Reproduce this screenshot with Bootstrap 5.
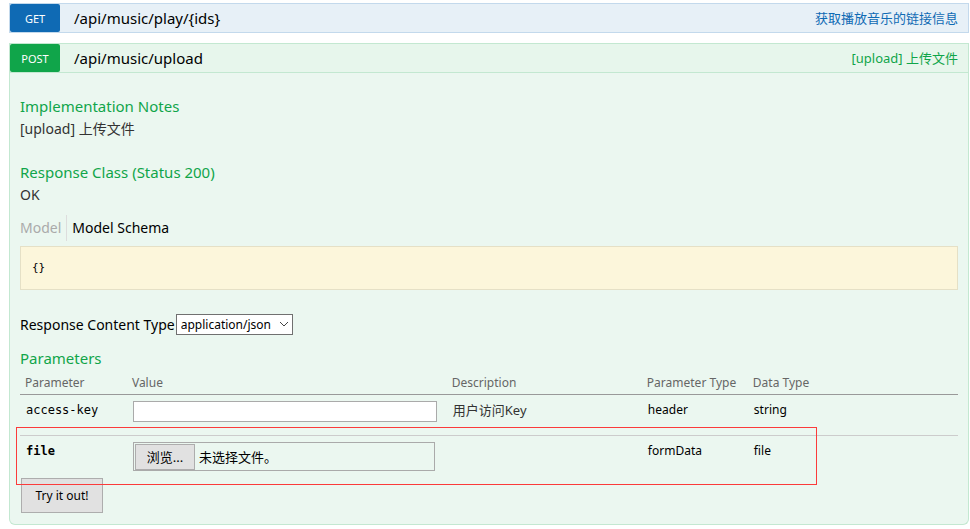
<!DOCTYPE html>
<html lang="zh-CN">
<head>
<meta charset="utf-8">
<meta name="viewport" content="width=device-width, initial-scale=1">
<title>API music</title>
<link rel="stylesheet" href="https://cdn.jsdelivr.net/npm/bootstrap@5.3.0/dist/css/bootstrap.min.css">
<style>
body { font: 14px/20px "Noto Sans", "Noto Sans CJK SC", sans-serif; color: #000; background: #fff; padding: 3px 1px 4px 9px; }
a { text-decoration: none; }
.op-get { background: #e7f0f7; border: 1px solid #c3d9ec; margin-bottom: 10px; }
.op-post { background: #e7f6ec; border: 1px solid #c3e8d1; }
.op-get, .op-post { height: 30px; }
.verb { width: 50px; height: 28px; border-radius: 2px; color: #fff; font-size: 11px; line-height: 30px; text-align: center; }
.op-get .verb { background: #0f6ab4; }
.op-post .verb { background: #10a54a; }
.path { color: #000; font-size: 15px; padding-left: 14px; }
.summary { font-size: 13px; padding-right: 10px; }
.op-get .summary { color: #0f6ab4; }
.op-post .summary, .title { color: #10a54a; }
.details { background: #ebf7f0; border: 1px solid #c3e8d1; border-top: 0; border-radius: 0 0 6px 6px; padding: 21px 10px 11px; }
.title { font-size: 15px; line-height: 24px; margin: 0; font-weight: 400; }
.note { color: #333; line-height: 22px; margin-bottom: 20px; }
.tabs-line { line-height: 26px; margin: 9px 0 5px; }
.tabs-line a { color: #000; }
.tabs-line a:first-child { color: #aaa; border-right: 1px solid #ddd; padding-right: 5px; margin-right: 5px; }
.snippet { background: #fcf6db; border: 1px solid #e5e0c6; padding: 12px 11px; margin-bottom: 24px; font: 11px/18px "DejaVu Sans Mono", monospace; color: #000; }
.type-row { gap: 1px; }
.type-select { height: 21px; width: 117px; font-size: 12px; line-height: 18px; color: #000; background: #fff; border: 1px solid #707070; padding: 0 4px; appearance: none; }
.chevron { position: absolute; right: 4px; top: 7px; pointer-events: none; }
.params-title { margin-top: 11px; }
.params { table-layout: fixed; width: 100%; font-size: 12px; line-height: 18px; }
.params th { font-weight: 400; color: #666; padding: 4px 5px 2px; border-bottom: 1px solid #999; }
.params td { vertical-align: top; padding: 6px 6px 0; height: 41px; }
.params tbody tr + tr td { border-top: 1px solid #ccc; }
.params code { font: 12px/16px "DejaVu Sans Mono", monospace; color: #000; display: block; }
.c-name { width: 11.4%; } .c-value { width: 34.1%; } .c-desc { width: 20.8%; } .c-type { width: 11.3%; }
.params .desc { font-size: 13px; color: #333; }
.key-input { width: 304px; max-width: 100%; height: 21px; border: 1px solid #aaa; background: #fff; display: block; }
.file-box { width: 302px; max-width: 100%; height: 29px; border: 1px solid #aaa; padding: 1px; font-size: 13px; }
.file-btn { background: #e1e1e1; border: 1px solid #adadad; width: 60px; line-height: 24px; text-align: center; }
.try-btn { background: #e1e1e1; border: 1px solid #adadad; color: #000; border-radius: 0; font-size: 12px; line-height: 18px; padding: 8px 11px; margin: 1px 0 0 1px; width: 82px; height: 35px; white-space: nowrap; }
.highlight { position: absolute; left: -4px; width: 85.4%; bottom: -8px; height: 58px; border: 1px solid #fb3b3b; pointer-events: none; z-index: 1; }
</style>
<script src="https://cdn.jsdelivr.net/npm/bootstrap@5.3.0/dist/js/bootstrap.bundle.min.js"></script>
</head>
<body>
<main>
  <div class="op-get d-flex align-items-center">
    <a href="#play" class="verb">GET</a>
    <a href="#play" class="path">/api/music/play/{ids}</a>
    <a href="#play" class="summary ms-auto">获取播放音乐的链接信息</a>
  </div>
  <div class="op-post d-flex align-items-center">
    <a href="#upload" class="verb">POST</a>
    <a href="#upload" class="path">/api/music/upload</a>
    <a href="#upload" class="summary ms-auto">[upload] 上传文件</a>
  </div>
  <section class="details" id="upload">
    <h4 class="title">Implementation Notes</h4>
    <div class="note">[upload] 上传文件</div>
    <h4 class="title">Response Class (Status 200)</h4>
    <div class="note mb-0">OK</div>
    <nav class="tabs-line d-flex"><a href="#model">Model</a><a href="#schema">Model Schema</a></nav>
    <pre class="snippet">{}</pre>
    <div class="type-row d-flex align-items-center">
      <label for="ctype">Response Content Type</label>
      <div class="position-relative d-flex">
        <select id="ctype" class="type-select"><option>application/json</option></select>
        <svg class="chevron" width="10" height="7" viewBox="0 0 10 7" fill="none" stroke="#444"><path d="M1 1l4 4 4-4"/></svg>
      </div>
    </div>
    <form>
      <h4 class="title params-title">Parameters</h4>
      <div class="position-relative">
        <table class="params">
          <thead><tr><th class="c-name">Parameter</th><th class="c-value">Value</th><th class="c-desc">Description</th><th class="c-type text-nowrap">Parameter Type</th><th>Data Type</th></tr></thead>
          <tbody>
            <tr><td><label for="key"><code>access-key</code></label></td><td><input type="text" id="key" class="key-input"></td><td class="desc">用户访问Key</td><td>header</td><td>string</td></tr>
            <tr><td><label for="file"><code class="fw-bold">file</code></label></td><td><input type="file" id="file" class="visually-hidden"><label for="file" class="file-box d-flex align-items-center"><span class="file-btn">浏览...</span><span class="ps-1">未选择文件。</span></label></td><td></td><td>formData</td><td>file</td></tr>
          </tbody>
        </table>
        <div class="highlight"></div>
      </div>
      <button type="button" class="try-btn">Try it out!</button>
    </form>
  </section>
</main>
</body>
</html>
